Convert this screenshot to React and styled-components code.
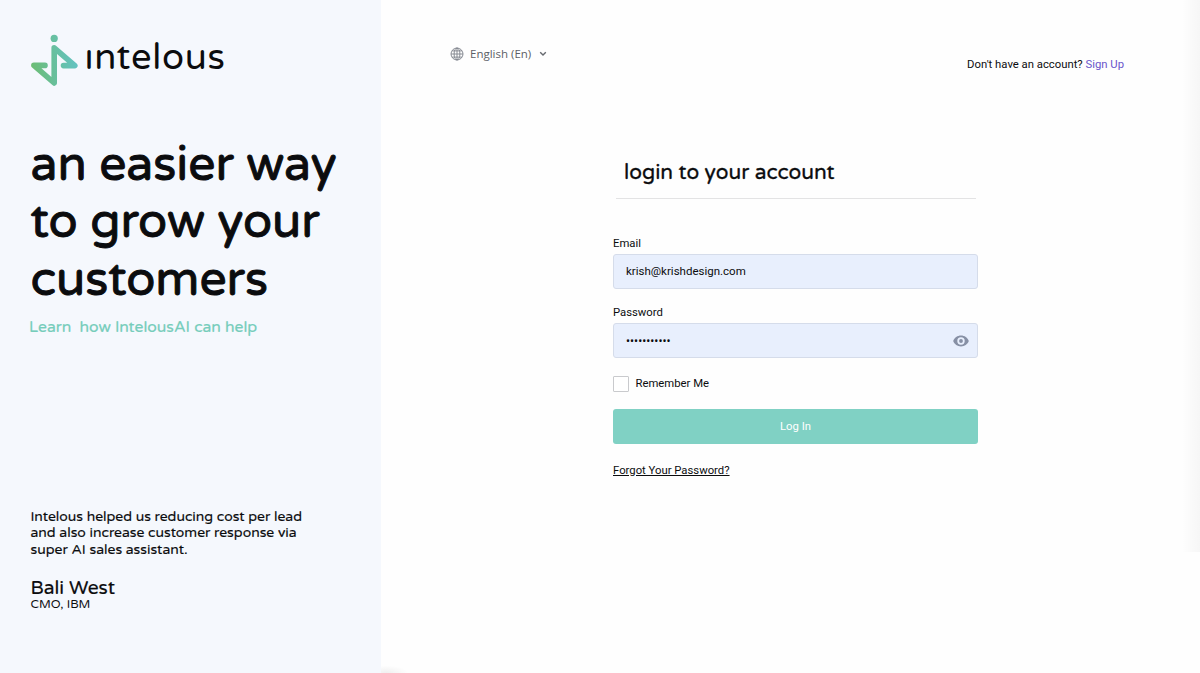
import React, { useState } from 'react';
import styled, { createGlobalStyle } from 'styled-components';

const App = () => {
    const [email, setEmail] = useState('krish@krishdesign.com');
    const [password, setPassword] = useState('intelousai1');
    const [visible, setVisible] = useState(false);

    return (
        <>
            <GlobalStyle />
            <Page>
                <Sidebar>
                    <Brand>
                        <BrandMark />
                        <BrandName>ıntelous</BrandName>
                    </Brand>
                    <Headline>
                        an easier way
                        <br />
                        to grow your
                        <br />
                        customers
                    </Headline>
                    <LearnLink href="#">Learn&nbsp; how IntelousAI can help</LearnLink>
                    <Testimonial>
                        <Quote>
                            Intelous helped us reducing cost per lead
                            <br />
                            and also increase customer response via
                            <br />
                            super AI sales assistant.
                        </Quote>
                        <Author>Bali West</Author>
                        <Role>CMO, IBM</Role>
                    </Testimonial>
                </Sidebar>
                <Main>
                    <TopBar>
                        <LanguageButton type="button">
                            <GlobeIcon />
                            <Language>English (En)</Language>
                            <ChevronIcon />
                        </LanguageButton>
                        <SignUpText>
                            Don't have an account? <SignUpLink href="#">Sign Up</SignUpLink>
                        </SignUpText>
                    </TopBar>
                    <Form onSubmit={(e) => e.preventDefault()}>
                        <Title>login to your account</Title>
                        <Label htmlFor="email">Email</Label>
                        <Field>
                            <Input id="email" type="text" value={email} onChange={(e) => setEmail(e.target.value)} />
                        </Field>
                        <Label htmlFor="password">Password</Label>
                        <Field>
                            <Input
                                id="password"
                                type={visible ? 'text' : 'password'}
                                value={password}
                                onChange={(e) => setPassword(e.target.value)}
                            />
                            <EyeButton type="button" aria-label="Show password" onClick={() => setVisible(!visible)}>
                                <EyeIcon />
                            </EyeButton>
                        </Field>
                        <Remember>
                            <Checkbox type="checkbox" />
                            Remember Me
                        </Remember>
                        <LoginButton type="submit">Log In</LoginButton>
                        <ForgotLink href="#">Forgot Your Password?</ForgotLink>
                    </Form>
                </Main>
                <EdgeShade />
                <CornerShade />
            </Page>
        </>
    );
};

export default App;

const BrandMark = () => (
    <svg width="50" height="54" viewBox="0 0 50 54" fill="none">
        <defs>
            <linearGradient id="mark" gradientUnits="userSpaceOnUse" x1="2" y1="38" x2="48" y2="32">
                <stop offset="0" stopColor="#6cbd74" />
                <stop offset="0.45" stopColor="#68bf9a" />
                <stop offset="1" stopColor="#62c3c2" />
            </linearGradient>
        </defs>
        <circle cx="24.2" cy="5.4" r="3.6" fill="url(#mark)" />
        <path
            d="M15 32.4 H3.9 L24.2 50 V14.8 L44.8 32.6 H33.5"
            stroke="url(#mark)"
            strokeWidth="5.6"
            strokeLinecap="round"
            strokeLinejoin="round"
        />
    </svg>
);

const GlobeIcon = () => (
    <svg width="14" height="14" viewBox="0 0 14 14" fill="none" stroke="#7d818a" strokeWidth="0.9">
        <circle cx="7" cy="7" r="6" />
        <ellipse cx="7" cy="7" rx="2.9" ry="6" />
        <path d="M7 1V13M1 7H13M2 3.9H12M2 10.1H12" />
    </svg>
);

const ChevronIcon = () => (
    <svg width="8" height="6" viewBox="0 0 8 6" fill="none" stroke="#66696f" strokeWidth="1.4">
        <path d="M1.2 1.3L4 4.1L6.8 1.3" />
    </svg>
);

const EyeIcon = () => (
    <svg width="16" height="12" viewBox="0 0 16 12">
        <path
            fill="#8790a5"
            fillRule="evenodd"
            d="M8 0.6C4.4 0.6 1.4 2.8 0.2 6C1.4 9.2 4.4 11.4 8 11.4S14.6 9.2 15.8 6C14.6 2.8 11.6 0.6 8 0.6ZM8 9.7A3.7 3.7 0 1 1 8 2.3A3.7 3.7 0 0 1 8 9.7ZM8 4.1A1.9 1.9 0 1 0 8 7.9A1.9 1.9 0 0 0 8 4.1Z"
        />
    </svg>
);

// Styled Components
const GlobalStyle = createGlobalStyle`
  * {
    box-sizing: border-box;
  }

  body {
    margin: 0;
    background: #fefefe;
    color: #0b0c0e;
    font-family: Roboto, "Liberation Sans", sans-serif;
    font-size: 11.3px;
  }
`;

const rounded = '"Varela Round", "Noto Sans", sans-serif';

const Page = styled.div`
  position: relative;
  display: flex;
  height: 673px;
  overflow: hidden;
`;

const Sidebar = styled.aside`
  display: flex;
  flex-direction: column;
  align-items: flex-start;
  width: 381px;
  padding: 33px 0 0 30px;
  background: #f5f8fd;
  font-family: ${rounded};
  white-space: nowrap;
`;

const Brand = styled.div`
  display: flex;
  height: 54px;
`;

const BrandName = styled.span`
  margin-left: 4.5px;
  font-size: 36.3px;
  line-height: 50px;
  letter-spacing: 0.7px;
`;

const Headline = styled.h1`
  margin: 49.5px 0 0 0.5px;
  font-size: 48px;
  font-weight: 400;
  line-height: 57.5px;
  -webkit-text-stroke: 1px #0b0c0e;
`;

const LearnLink = styled.a`
  margin: 6.5px 0 0 -1px;
  color: #76cdbb;
  font-size: 15.7px;
  line-height: 22px;
  text-decoration: none;
  -webkit-text-stroke: 0.2px #76cdbb;
`;

const Testimonial = styled.div`
  margin-top: 171px;
`;

const Quote = styled.p`
  margin: 0 0 0 0.5px;
  font-size: 13.98px;
  line-height: 16.6px;
  -webkit-text-stroke: 0.15px #0b0c0e;
`;

const Author = styled.div`
  margin: 17px 0 0 0.5px;
  font-size: 19.2px;
  line-height: 26px;
  -webkit-text-stroke: 0.2px #0b0c0e;
`;

const Role = styled.div`
  margin: -4px 0 0 0.5px;
  font-size: 12.2px;
  line-height: 14px;
`;

const Main = styled.main`
  display: flex;
  flex: 1;
  flex-direction: column;
`;

const TopBar = styled.header`
  display: flex;
  justify-content: space-between;
  align-items: flex-start;
  height: 74px;
  padding: 44px 76px 0 69px;
`;

const LanguageButton = styled.button`
  display: flex;
  align-items: center;
  height: 20px;
  padding: 0;
  border: 0;
  background: none;
  color: #5c5f66;
  font-family: "Open Sans", sans-serif;
  font-size: 11.5px;
`;

const Language = styled.span`
  margin: -2px 8px 0 6px;
`;

const SignUpText = styled.div`
  margin-top: 12px;
  line-height: 18px;
`;

const SignUpLink = styled.a`
  color: #6a55cb;
  text-decoration: none;
`;

const Form = styled.form`
  display: flex;
  flex-direction: column;
  align-items: stretch;
  width: 365px;
  margin: 83px 0 0 232px;
`;

const Title = styled.h2`
  height: 42px;
  margin: 0 2px 35px 3px;
  padding-left: 8px;
  border-bottom: 1px solid #e3e3e4;
  font-family: ${rounded};
  font-size: 20.95px;
  font-weight: 400;
  line-height: 32px;
  -webkit-text-stroke: 0.3px #0b0c0e;
`;

const Label = styled.label`
  height: 20px;
  line-height: 20px;
`;

const Field = styled.div`
  display: flex;
  align-items: center;
  height: 35px;
  margin-bottom: 14.4px;
  padding: 0 8px 0 12px;
  border: 1px solid #d5dcea;
  border-radius: 3px;
  background: #e8effd;
`;

const Input = styled.input`
  flex: 1;
  padding: 0 0 1px;
  border: 0;
  outline: 0;
  background: none;
  color: #0b0c0e;
  font: inherit;
  font-size: 11.5px;

  &[type='password'] {
    padding: 1px 0 0;
    font-size: 12px;
  }
`;

const EyeButton = styled.button`
  display: flex;
  padding: 0;
  border: 0;
  background: none;
`;

const Remember = styled.label`
  display: flex;
  align-items: center;
  gap: 6.5px;
  height: 16px;
  margin: 3px 0 17px;
`;

const Checkbox = styled.input`
  appearance: none;
  width: 16px;
  height: 16px;
  margin: 0;
  border: 1px solid #c9cacd;
  border-radius: 1px;
  background: #fff;
`;

const LoginButton = styled.button`
  height: 35px;
  padding: 0;
  border: 0;
  border-radius: 3px;
  background: #80d1c4;
  color: #fff;
  font: inherit;
`;

const ForgotLink = styled.a`
  align-self: flex-start;
  margin-top: 18px;
  color: #0b0c0e;
  line-height: 18px;
  text-underline-offset: 1px;
`;

// soft shadow on the right edge of the window
const EdgeShade = styled.div`
  position: absolute;
  top: 0;
  right: 0;
  width: 18px;
  height: 552px;
  background: linear-gradient(to right, rgba(0, 0, 0, 0), rgba(0, 0, 0, 0.03));
`;

const CornerShade = styled.div`
  position: absolute;
  bottom: 0;
  left: 381px;
  width: 26px;
  height: 7px;
  background: radial-gradient(ellipse at 20% 100%, rgba(0, 0, 0, 0.06), rgba(0, 0, 0, 0) 75%);
`;
